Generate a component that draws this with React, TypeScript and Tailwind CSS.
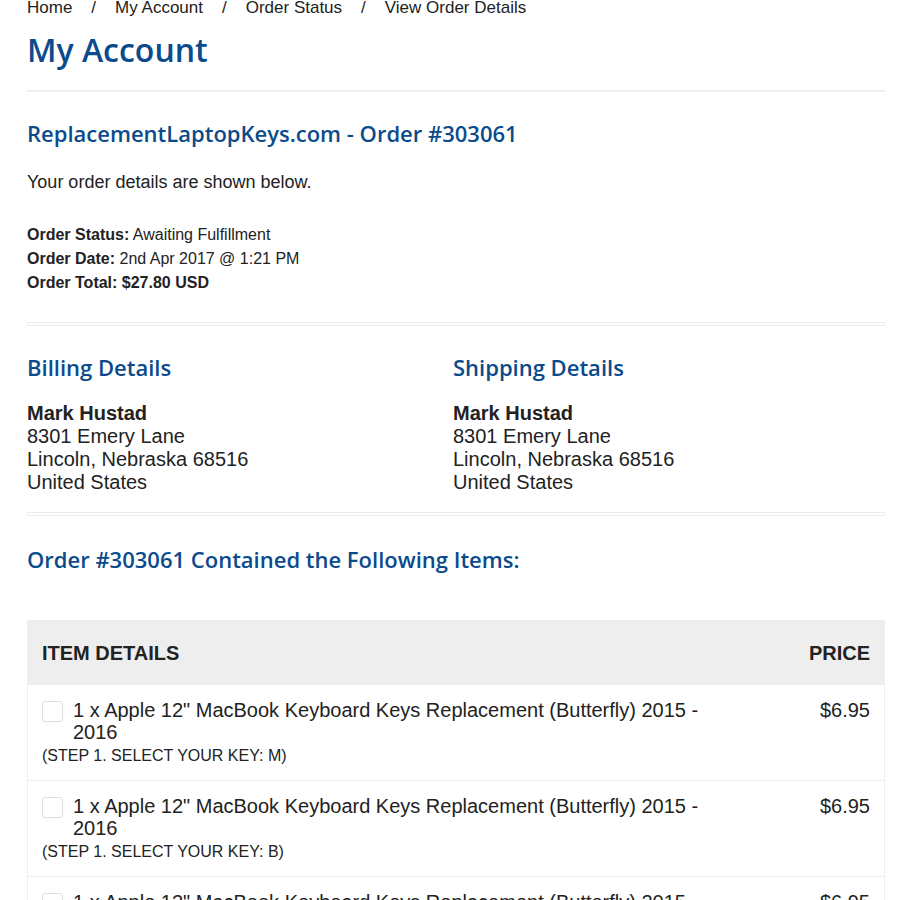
import React from "react";

const heading = "font-['Open_Sans',sans-serif] font-semibold text-[#0b4b8c]";

const items = [
  { name: '1 x Apple 12" MacBook Keyboard Keys Replacement (Butterfly) 2015 - 2016', key: "M", price: "$6.95" },
  { name: '1 x Apple 12" MacBook Keyboard Keys Replacement (Butterfly) 2015 - 2016', key: "B", price: "$6.95" },
  { name: '1 x Apple 12" MacBook Keyboard Keys Replacement (Butterfly) 2015 - 2016', key: "K", price: "$6.95" },
];

const Address = ({ title }: { title: string }) => (
  <div>
    <h3 className={`${heading} text-[22px] leading-[30px]`}>{title}</h3>
    <div className="mt-[20px] text-[20px] leading-[23px] text-[#222]">
      <div className="font-bold">Mark Hustad</div>
      <div>8301 Emery Lane</div>
      <div>Lincoln, Nebraska 68516</div>
      <div>United States</div>
    </div>
  </div>
);

export default function App() {
  return (
    <div className="min-h-[900px] bg-white font-['Liberation_Sans',Arial,sans-serif] text-[#222]">
      <div className="ml-[27px] mr-[15px] -mt-[2px]">
        <nav className="flex gap-[19px] text-[17px] leading-[20px] text-[#222]">
          <span>Home</span>
          <span>/</span>
          <span>My Account</span>
          <span>/</span>
          <span>Order Status</span>
          <span>/</span>
          <span>View Order Details</span>
        </nav>

        <h1 className={`${heading} mt-[12px] text-[32px] leading-[40px]`}>My Account</h1>

        <div className="mt-[20px] h-[2px] bg-[#efefef]" />

        <h2 className={`${heading} mt-[26px] text-[22px] leading-[30px]`}>
          ReplacementLaptopKeys.com - Order #303061
        </h2>

        <p className="mt-[22px] text-[18px] leading-[24px]">Your order details are shown below.</p>

        <div className="mt-[29px] text-[16px] leading-[24px]">
          <div>
            <b>Order Status:</b> Awaiting Fulfillment
          </div>
          <div>
            <b>Order Date:</b> 2nd Apr 2017 @ 1:21 PM
          </div>
          <div className="font-bold">Order Total: $27.80 USD</div>
        </div>

        <div className="mt-[27px] h-[4px] border border-[#ececec]" />

        <div className="mt-[26px] grid grid-cols-[426px_1fr]">
          <Address title="Billing Details" />
          <Address title="Shipping Details" />
        </div>

        <div className="mt-[18px] h-[4px] border border-[#ececec]" />

        <h2 className={`${heading} mt-[28px] text-[22px] leading-[30px]`}>
          Order #303061 Contained the Following Items:
        </h2>

        <div className="mt-[46px] border border-[#eeeeee]">
          <div className="flex h-[63px] items-center justify-between bg-[#eeeeee] px-[14px] text-[20px] font-bold uppercase text-[#222]">
            <span>Item Details</span>
            <span>Price</span>
          </div>
          {items.map((it, i) => (
            <div key={i} className="flex justify-between border-t border-[#eeeeee] px-[14px] pb-[14px] pt-[14px]">
              <div className="w-[700px]">
                <div className="flex items-start gap-[10px]">
                  <span className="mt-[2px] h-[21px] w-[21px] shrink-0 rounded-[3px] border border-[#dddddd] bg-white" />
                  <span className="flex-1 text-[20px] leading-[22px]">{it.name}</span>
                </div>
                <div className="mt-[3px] text-[16px] leading-[20px]">(STEP 1. SELECT YOUR KEY: {it.key})</div>
              </div>
              <div className="text-[20px] leading-[22px]">{it.price}</div>
            </div>
          ))}
        </div>
      </div>
    </div>
  );
}
